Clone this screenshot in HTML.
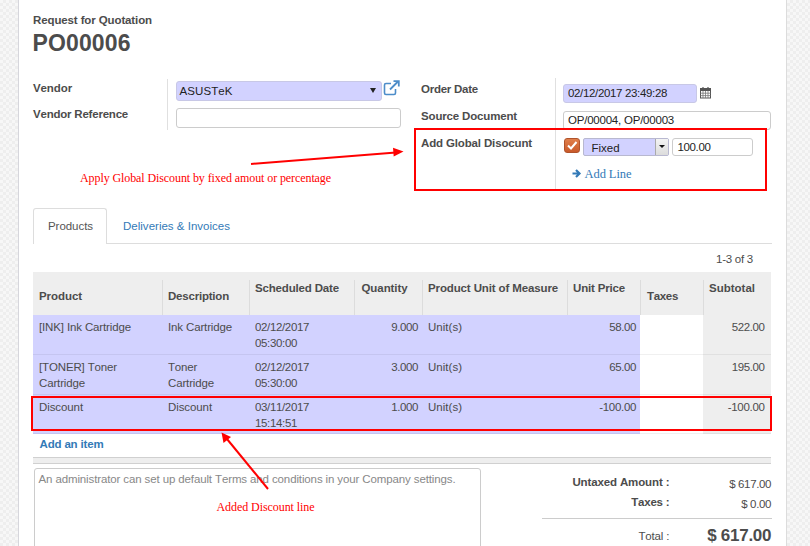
<!DOCTYPE html>
<html><head><meta charset="utf-8"><style>
html,body{margin:0;padding:0;width:810px;height:546px;overflow:hidden;background:#fff;}
.t{position:absolute;white-space:nowrap;font-kerning:none;}
.r{position:absolute;}
</style></head><body>
<div class="r" style="left:0px;top:0px;width:18px;height:546px;background-color:#f7f7f7;background-image:linear-gradient(45deg,#eeeeee 25%,transparent 25%,transparent 75%,#eeeeee 75%),linear-gradient(45deg,#eeeeee 25%,transparent 25%,transparent 75%,#eeeeee 75%);background-size:6px 6px;background-position:0 0,3px 3px;"></div>
<div class="r" style="left:18px;top:0px;width:1px;height:546px;background:#d6d6dc;"></div>
<div class="r" style="left:787px;top:0px;width:23px;height:546px;background-color:#f7f7f7;background-image:linear-gradient(45deg,#eeeeee 25%,transparent 25%,transparent 75%,#eeeeee 75%),linear-gradient(45deg,#eeeeee 25%,transparent 25%,transparent 75%,#eeeeee 75%);background-size:6px 6px;background-position:0 0,3px 3px;"></div>
<div class="r" style="left:786px;top:0px;width:1px;height:546px;background:#dcdcdc;"></div>
<div class="t" style="left:33px;top:14.77px;font-size:11.5px;line-height:11.5px;font-weight:bold;font-family:'Liberation Sans', sans-serif;color:#4c4c4c;letter-spacing:-0.114px;">Request for Quotation</div>
<div class="t" style="left:32.6px;top:32.03px;font-size:23px;line-height:23px;font-weight:bold;font-family:'Liberation Sans', sans-serif;color:#4c4c4c;letter-spacing:0.116px;">PO00006</div>
<div class="t" style="left:33px;top:83.07px;font-size:11.5px;line-height:11.5px;font-weight:bold;font-family:'Liberation Sans', sans-serif;color:#4c4c4c;letter-spacing:-0.103px;">Vendor</div>
<div class="t" style="left:33px;top:109.07px;font-size:11.5px;line-height:11.5px;font-weight:bold;font-family:'Liberation Sans', sans-serif;color:#4c4c4c;letter-spacing:-0.214px;">Vendor Reference</div>
<div class="r" style="left:167px;top:79px;width:1px;height:51px;background:#e0e0e0;"></div>
<div class="r" style="left:176px;top:81px;width:206px;height:20px;background:#d2d2ff;border-radius:3px;box-sizing:border-box;border:1px solid #c8c8e6;"></div>
<div class="t" style="left:179.5px;top:86.07px;font-size:11.5px;line-height:11.5px;font-weight:normal;font-family:'Liberation Sans', sans-serif;color:#222;letter-spacing:0.085px;">ASUSTeK</div>
<div class="t" style="left:370px;top:88px;width:0;height:0;border-left:3px solid transparent;border-right:3px solid transparent;border-top:5px solid #222;"></div>
<svg class="r" style="left:383px;top:80px" width="19" height="16" viewBox="0 0 19 16"><path d="M8 3.5 H3 Q1.5 3.5 1.5 5 V13 Q1.5 14.5 3 14.5 H11 Q12.5 14.5 12.5 13 V9" fill="none" stroke="#4d8dc9" stroke-width="1.6"/><path d="M7 9.5 L15 1.5 M10.5 1.2 H15.8 V6.5" fill="none" stroke="#4d8dc9" stroke-width="1.8"/></svg>
<div class="r" style="left:176px;top:108px;width:225px;height:20px;background:#fff;border-radius:3px;box-sizing:border-box;border:1px solid #ccc;"></div>
<div class="t" style="left:421px;top:83.97px;font-size:11.5px;line-height:11.5px;font-weight:bold;font-family:'Liberation Sans', sans-serif;color:#4c4c4c;letter-spacing:-0.244px;">Order Date</div>
<div class="t" style="left:421px;top:111.17px;font-size:11.5px;line-height:11.5px;font-weight:bold;font-family:'Liberation Sans', sans-serif;color:#4c4c4c;letter-spacing:-0.160px;">Source Document</div>
<div class="t" style="left:421px;top:138.07px;font-size:11.5px;line-height:11.5px;font-weight:bold;font-family:'Liberation Sans', sans-serif;color:#4c4c4c;letter-spacing:-0.143px;">Add Global Disocunt</div>
<div class="r" style="left:555px;top:78px;width:1px;height:112px;background:#e0e0e0;"></div>
<div class="r" style="left:563px;top:83.5px;width:134px;height:19px;background:#d2d2ff;border-radius:3px;box-sizing:border-box;border:1px solid #c8c8e6;"></div>
<div class="t" style="left:568px;top:88.17px;font-size:11.5px;line-height:11.5px;font-weight:normal;font-family:'Liberation Sans', sans-serif;color:#222;letter-spacing:-0.343px;">02/12/2017 23:49:28</div>
<svg class="r" style="left:699px;top:86px" width="13" height="13" viewBox="0 0 13 13"><rect x="1.5" y="2.5" width="10" height="9.5" fill="none" stroke="#555" stroke-width="1"/><rect x="1.5" y="2.5" width="10" height="2.5" fill="#555"/><path d="M4 1 V3 M9 1 V3" stroke="#555" stroke-width="1.2"/><path d="M1.5 7.2 H11.5 M1.5 9.6 H11.5 M4 5 V12 M6.5 5 V12 M9 5 V12" stroke="#777" stroke-width="0.8"/></svg>
<div class="r" style="left:563px;top:110.5px;width:208px;height:19px;background:#fff;border-radius:3px;box-sizing:border-box;border:1px solid #ccc;"></div>
<div class="t" style="left:568px;top:114.87px;font-size:11.5px;line-height:11.5px;font-weight:normal;font-family:'Liberation Sans', sans-serif;color:#222;letter-spacing:-0.221px;">OP/00004, OP/00003</div>
<div class="r" style="left:564px;top:138px;width:16px;height:15px;border-radius:3px;background:linear-gradient(#e07f4b,#c9592a);border:1px solid #b0532b;box-sizing:border-box;"></div>
<svg class="r" style="left:565px;top:139px" width="14" height="13" viewBox="0 0 14 13"><path d="M3 6.5 L6 9.5 L11.5 3" fill="none" stroke="#fff" stroke-width="2"/></svg>
<div class="r" style="left:583px;top:137.5px;width:86px;height:18.5px;background:#d2d2ff;border-radius:2px;box-sizing:border-box;border:1px solid #b8b8d0;"></div>
<div class="r" style="left:655px;top:138.5px;width:13px;height:16.5px;background:linear-gradient(#f4f4f4,#dcdcdc);border-left:1px solid #aaa;box-sizing:border-box;"></div>
<div class="t" style="left:658.5px;top:145px;width:0;height:0;border-left:3px solid transparent;border-right:3px solid transparent;border-top:3.5px solid #111;"></div>
<div class="t" style="left:591.5px;top:142.77px;font-size:11.5px;line-height:11.5px;font-weight:normal;font-family:'Liberation Sans', sans-serif;color:#222;letter-spacing:-0.024px;">Fixed</div>
<div class="r" style="left:672px;top:137.5px;width:81px;height:18.5px;background:#fff;border-radius:3px;box-sizing:border-box;border:1px solid #ccc;"></div>
<div class="t" style="left:677.5px;top:142.07px;font-size:11.5px;line-height:11.5px;font-weight:normal;font-family:'Liberation Sans', sans-serif;color:#222;letter-spacing:-0.362px;">100.00</div>
<svg class="r" style="left:572px;top:168px" width="10" height="11" viewBox="0 0 10 11"><path d="M0.5 5.5 H7 M4 2 L7.5 5.5 L4 9" fill="none" stroke="#337ab7" stroke-width="2.2"/></svg>
<div class="t" style="left:584.5px;top:167.83px;font-size:12.5px;line-height:12.5px;font-weight:normal;font-family:'Liberation Serif', serif;color:#337ab7;letter-spacing:-0.070px;">Add Line</div>
<div class="r" style="left:414px;top:128px;width:353px;height:63px;border:2px solid #ff0000;box-sizing:border-box;"></div>
<div class="t" style="left:80px;top:172.45px;font-size:12px;line-height:12px;font-weight:normal;font-family:'Liberation Serif', serif;color:#ff0000;letter-spacing:-0.092px;">Apply Global Discount by fixed amout or percentage</div>
<div class="r" style="left:33px;top:243px;width:739px;height:1px;background:#dddddd;"></div>
<div class="r" style="left:33px;top:208px;width:74px;height:36px;background:#fff;border:1px solid #dddddd;border-bottom:none;border-radius:3px 3px 0 0;box-sizing:border-box;"></div>
<div class="t" style="left:48px;top:221.27px;font-size:11.5px;line-height:11.5px;font-weight:normal;font-family:'Liberation Sans', sans-serif;color:#555;letter-spacing:-0.048px;">Products</div>
<div class="t" style="left:123px;top:221.27px;font-size:11.5px;line-height:11.5px;font-weight:normal;font-family:'Liberation Sans', sans-serif;color:#337ab7;letter-spacing:0.013px;">Deliveries &amp; Invoices</div>
<div class="t" style="left:716px;top:253.77px;font-size:11.5px;line-height:11.5px;font-weight:normal;font-family:'Liberation Sans', sans-serif;color:#4c4c4c;letter-spacing:-0.250px;">1-3 of 3</div>
<div class="r" style="left:33px;top:272px;width:738px;height:43px;background:#eeeeee;"></div>
<div class="r" style="left:162px;top:280px;width:1px;height:35px;background:#dcdcdc;"></div>
<div class="r" style="left:249px;top:280px;width:1px;height:35px;background:#dcdcdc;"></div>
<div class="r" style="left:354px;top:280px;width:1px;height:35px;background:#dcdcdc;"></div>
<div class="r" style="left:422px;top:280px;width:1px;height:35px;background:#dcdcdc;"></div>
<div class="r" style="left:567px;top:280px;width:1px;height:35px;background:#dcdcdc;"></div>
<div class="r" style="left:640px;top:280px;width:1px;height:35px;background:#dcdcdc;"></div>
<div class="r" style="left:703px;top:280px;width:1px;height:35px;background:#dcdcdc;"></div>
<div class="t" style="left:39px;top:291.07px;font-size:11.5px;line-height:11.5px;font-weight:bold;font-family:'Liberation Sans', sans-serif;color:#4c4c4c;letter-spacing:-0.064px;">Product</div>
<div class="t" style="left:168px;top:291.07px;font-size:11.5px;line-height:11.5px;font-weight:bold;font-family:'Liberation Sans', sans-serif;color:#4c4c4c;letter-spacing:-0.206px;">Description</div>
<div class="t" style="left:255px;top:282.57px;font-size:11.5px;line-height:11.5px;font-weight:bold;font-family:'Liberation Sans', sans-serif;color:#4c4c4c;letter-spacing:-0.162px;">Scheduled Date</div>
<div class="t" style="left:361.5px;top:282.57px;font-size:11.5px;line-height:11.5px;font-weight:bold;font-family:'Liberation Sans', sans-serif;color:#4c4c4c;letter-spacing:-0.080px;">Quantity</div>
<div class="t" style="left:428px;top:282.57px;font-size:11.5px;line-height:11.5px;font-weight:bold;font-family:'Liberation Sans', sans-serif;color:#4c4c4c;letter-spacing:-0.126px;">Product Unit of Measure</div>
<div class="t" style="left:573px;top:282.57px;font-size:11.5px;line-height:11.5px;font-weight:bold;font-family:'Liberation Sans', sans-serif;color:#4c4c4c;letter-spacing:-0.168px;">Unit Price</div>
<div class="t" style="left:647px;top:291.07px;font-size:11.5px;line-height:11.5px;font-weight:bold;font-family:'Liberation Sans', sans-serif;color:#4c4c4c;letter-spacing:-0.322px;">Taxes</div>
<div class="t" style="left:709px;top:282.57px;font-size:11.5px;line-height:11.5px;font-weight:bold;font-family:'Liberation Sans', sans-serif;color:#4c4c4c;letter-spacing:0.001px;">Subtotal</div>
<div class="r" style="left:33px;top:315px;width:607px;height:40px;background:#d2d2ff;"></div>
<div class="r" style="left:640px;top:315px;width:63px;height:40px;background:#fff;"></div>
<div class="r" style="left:703px;top:315px;width:68px;height:40px;background:#eeeeee;"></div>
<div class="r" style="left:33px;top:354px;width:738px;height:1px;background:rgba(0,0,0,0.06);"></div>
<div class="t" style="left:39px;top:322.07px;font-size:11.5px;line-height:11.5px;font-weight:normal;font-family:'Liberation Sans', sans-serif;color:#4c4c4c;letter-spacing:-0.136px;">[INK] Ink Cartridge</div>
<div class="t" style="left:168px;top:322.07px;font-size:11.5px;line-height:11.5px;font-weight:normal;font-family:'Liberation Sans', sans-serif;color:#4c4c4c;letter-spacing:-0.141px;">Ink Cartridge</div>
<div class="t" style="left:255px;top:322.07px;font-size:11.5px;line-height:11.5px;font-weight:normal;font-family:'Liberation Sans', sans-serif;color:#4c4c4c;letter-spacing:-0.356px;">02/12/2017</div>
<div class="t" style="left:255px;top:337.57px;font-size:11.5px;line-height:11.5px;font-weight:normal;font-family:'Liberation Sans', sans-serif;color:#4c4c4c;letter-spacing:-0.346px;">05:30:00</div>
<div class="t" style="right:391.86px;top:322.07px;font-size:11.5px;line-height:11.5px;font-weight:normal;font-family:'Liberation Sans', sans-serif;color:#4c4c4c;letter-spacing:-0.356px;">9.000</div>
<div class="t" style="left:428px;top:322.07px;font-size:11.5px;line-height:11.5px;font-weight:normal;font-family:'Liberation Sans', sans-serif;color:#4c4c4c;letter-spacing:0.020px;">Unit(s)</div>
<div class="t" style="right:173.86px;top:322.07px;font-size:11.5px;line-height:11.5px;font-weight:normal;font-family:'Liberation Sans', sans-serif;color:#4c4c4c;letter-spacing:-0.356px;">58.00</div>
<div class="t" style="right:45.36px;top:322.07px;font-size:11.5px;line-height:11.5px;font-weight:normal;font-family:'Liberation Sans', sans-serif;color:#4c4c4c;letter-spacing:-0.362px;">522.00</div>
<div class="r" style="left:33px;top:355px;width:607px;height:40px;background:#d2d2ff;"></div>
<div class="r" style="left:640px;top:355px;width:63px;height:40px;background:#fff;"></div>
<div class="r" style="left:703px;top:355px;width:68px;height:40px;background:#eeeeee;"></div>
<div class="r" style="left:33px;top:394px;width:738px;height:1px;background:rgba(0,0,0,0.06);"></div>
<div class="t" style="left:39px;top:362.07px;font-size:11.5px;line-height:11.5px;font-weight:normal;font-family:'Liberation Sans', sans-serif;color:#4c4c4c;letter-spacing:-0.144px;">[TONER] Toner</div>
<div class="t" style="left:39px;top:377.57px;font-size:11.5px;line-height:11.5px;font-weight:normal;font-family:'Liberation Sans', sans-serif;color:#4c4c4c;letter-spacing:-0.144px;">Cartridge</div>
<div class="t" style="left:168px;top:362.07px;font-size:11.5px;line-height:11.5px;font-weight:normal;font-family:'Liberation Sans', sans-serif;color:#4c4c4c;letter-spacing:-0.208px;">Toner</div>
<div class="t" style="left:168px;top:377.57px;font-size:11.5px;line-height:11.5px;font-weight:normal;font-family:'Liberation Sans', sans-serif;color:#4c4c4c;letter-spacing:-0.144px;">Cartridge</div>
<div class="t" style="left:255px;top:362.07px;font-size:11.5px;line-height:11.5px;font-weight:normal;font-family:'Liberation Sans', sans-serif;color:#4c4c4c;letter-spacing:-0.356px;">02/12/2017</div>
<div class="t" style="left:255px;top:377.57px;font-size:11.5px;line-height:11.5px;font-weight:normal;font-family:'Liberation Sans', sans-serif;color:#4c4c4c;letter-spacing:-0.346px;">05:30:00</div>
<div class="t" style="right:391.86px;top:362.07px;font-size:11.5px;line-height:11.5px;font-weight:normal;font-family:'Liberation Sans', sans-serif;color:#4c4c4c;letter-spacing:-0.356px;">3.000</div>
<div class="t" style="left:428px;top:362.07px;font-size:11.5px;line-height:11.5px;font-weight:normal;font-family:'Liberation Sans', sans-serif;color:#4c4c4c;letter-spacing:0.020px;">Unit(s)</div>
<div class="t" style="right:173.86px;top:362.07px;font-size:11.5px;line-height:11.5px;font-weight:normal;font-family:'Liberation Sans', sans-serif;color:#4c4c4c;letter-spacing:-0.356px;">65.00</div>
<div class="t" style="right:45.36px;top:362.07px;font-size:11.5px;line-height:11.5px;font-weight:normal;font-family:'Liberation Sans', sans-serif;color:#4c4c4c;letter-spacing:-0.362px;">195.00</div>
<div class="r" style="left:33px;top:395px;width:607px;height:39px;background:#d2d2ff;"></div>
<div class="r" style="left:640px;top:395px;width:63px;height:39px;background:#fff;"></div>
<div class="r" style="left:703px;top:395px;width:68px;height:39px;background:#eeeeee;"></div>
<div class="r" style="left:33px;top:433px;width:738px;height:1px;background:rgba(0,0,0,0.06);"></div>
<div class="t" style="left:39px;top:402.07px;font-size:11.5px;line-height:11.5px;font-weight:normal;font-family:'Liberation Sans', sans-serif;color:#4c4c4c;letter-spacing:-0.093px;">Discount</div>
<div class="t" style="left:168px;top:402.07px;font-size:11.5px;line-height:11.5px;font-weight:normal;font-family:'Liberation Sans', sans-serif;color:#4c4c4c;letter-spacing:-0.093px;">Discount</div>
<div class="t" style="left:255px;top:402.07px;font-size:11.5px;line-height:11.5px;font-weight:normal;font-family:'Liberation Sans', sans-serif;color:#4c4c4c;letter-spacing:-0.356px;">03/11/2017</div>
<div class="t" style="left:255px;top:417.57px;font-size:11.5px;line-height:11.5px;font-weight:normal;font-family:'Liberation Sans', sans-serif;color:#4c4c4c;letter-spacing:-0.346px;">15:14:51</div>
<div class="t" style="right:391.86px;top:402.07px;font-size:11.5px;line-height:11.5px;font-weight:normal;font-family:'Liberation Sans', sans-serif;color:#4c4c4c;letter-spacing:-0.356px;">1.000</div>
<div class="t" style="left:428px;top:402.07px;font-size:11.5px;line-height:11.5px;font-weight:normal;font-family:'Liberation Sans', sans-serif;color:#4c4c4c;letter-spacing:0.020px;">Unit(s)</div>
<div class="t" style="right:173.79px;top:402.07px;font-size:11.5px;line-height:11.5px;font-weight:normal;font-family:'Liberation Sans', sans-serif;color:#4c4c4c;letter-spacing:-0.286px;">-100.00</div>
<div class="t" style="right:45.29px;top:402.07px;font-size:11.5px;line-height:11.5px;font-weight:normal;font-family:'Liberation Sans', sans-serif;color:#4c4c4c;letter-spacing:-0.286px;">-100.00</div>
<div class="r" style="left:31px;top:396px;width:741px;height:35px;border:2px solid #ff0000;box-sizing:border-box;"></div>
<div class="t" style="left:39.5px;top:438.57px;font-size:11.5px;line-height:11.5px;font-weight:bold;font-family:'Liberation Sans', sans-serif;color:#337ab7;letter-spacing:-0.165px;">Add an item</div>
<div class="r" style="left:33px;top:457px;width:738px;height:7px;background:#eeeeee;border-top:1px solid #d0d0d0;border-bottom:1px solid #d0d0d0;box-sizing:border-box;"></div>
<div class="r" style="left:33.5px;top:468px;width:447px;height:90px;background:#fff;border:1px solid #ccc;border-radius:3px;box-sizing:border-box;"></div>
<div class="t" style="left:38.5px;top:473.67px;font-size:11.5px;line-height:11.5px;font-weight:normal;font-family:'Liberation Sans', sans-serif;color:#888;letter-spacing:-0.122px;">An administrator can set up default Terms and conditions in your Company settings.</div>
<div class="t" style="left:216.5px;top:501.05px;font-size:12px;line-height:12px;font-weight:normal;font-family:'Liberation Serif', serif;color:#ff0000;letter-spacing:-0.069px;">Added Discount line</div>
<div class="t" style="right:140.63px;top:476.97px;font-size:11.5px;line-height:11.5px;font-weight:bold;font-family:'Liberation Sans', sans-serif;color:#4c4c4c;letter-spacing:-0.127px;">Untaxed Amount :</div>
<div class="t" style="right:140.73px;top:497.27px;font-size:11.5px;line-height:11.5px;font-weight:bold;font-family:'Liberation Sans', sans-serif;color:#4c4c4c;letter-spacing:-0.233px;">Taxes :</div>
<div class="t" style="right:38.85px;top:478.97px;font-size:11.5px;line-height:11.5px;font-weight:normal;font-family:'Liberation Sans', sans-serif;color:#4c4c4c;letter-spacing:-0.346px;">$ 617.00</div>
<div class="t" style="right:38.83px;top:498.97px;font-size:11.5px;line-height:11.5px;font-weight:normal;font-family:'Liberation Sans', sans-serif;color:#4c4c4c;letter-spacing:-0.329px;">$ 0.00</div>
<div class="r" style="left:542px;top:518px;width:230px;height:1px;background:#cccccc;"></div>
<div class="t" style="right:140.64px;top:530.67px;font-size:11.5px;line-height:11.5px;font-weight:normal;font-family:'Liberation Sans', sans-serif;color:#4c4c4c;letter-spacing:-0.137px;">Total :</div>
<div class="t" style="right:38.77px;top:526.81px;font-size:17px;line-height:17px;font-weight:bold;font-family:'Liberation Sans', sans-serif;color:#4c4c4c;letter-spacing:-0.272px;">$ 617.00</div>
<svg class="r" style="left:0;top:0" width="810" height="546" viewBox="0 0 810 546"><line x1="251" y1="164" x2="396" y2="152.5" stroke="#ff0000" stroke-width="2"/><path d="M403.5 151.6 L393 147.8 L393.7 156.5 Z" fill="#ff0000"/><line x1="268" y1="489" x2="227" y2="439" stroke="#ff0000" stroke-width="2"/><path d="M221.5 432.5 L223.5 443 L231 437 Z" fill="#ff0000"/></svg>
</body></html>
